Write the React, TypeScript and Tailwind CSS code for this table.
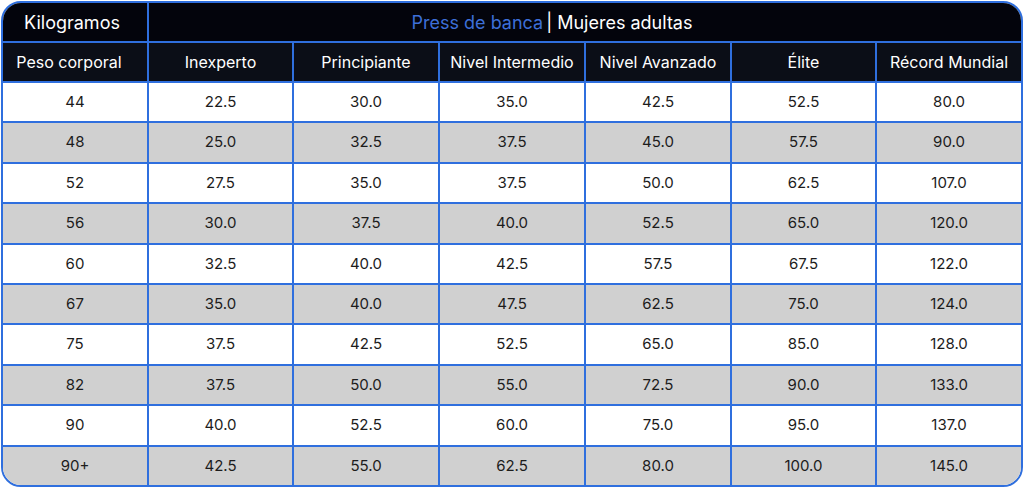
import React from "react";

const cols = ["Peso corporal", "Inexperto", "Principiante", "Nivel Intermedio", "Nivel Avanzado", "Élite", "Récord Mundial"];
const rows = [
  ["44", "22.5", "30.0", "35.0", "42.5", "52.5", "80.0"],
  ["48", "25.0", "32.5", "37.5", "45.0", "57.5", "90.0"],
  ["52", "27.5", "35.0", "37.5", "50.0", "62.5", "107.0"],
  ["56", "30.0", "37.5", "40.0", "52.5", "65.0", "120.0"],
  ["60", "32.5", "40.0", "42.5", "57.5", "67.5", "122.0"],
  ["67", "35.0", "40.0", "47.5", "62.5", "75.0", "124.0"],
  ["75", "37.5", "42.5", "52.5", "65.0", "85.0", "128.0"],
  ["82", "37.5", "50.0", "55.0", "72.5", "90.0", "133.0"],
  ["90", "40.0", "52.5", "60.0", "75.0", "95.0", "137.0"],
  ["90+", "42.5", "55.0", "62.5", "80.0", "100.0", "145.0"],
];

export default function App() {
  return (
    <div className="w-[1024px] h-[488px] bg-white p-[1px]" style={{ fontFamily: "Inter, 'Noto Sans', sans-serif" }}>
      <div className="w-[1022px] h-[486px] rounded-[20px] border-2 border-[#2f6fde] overflow-hidden flex flex-col">
        <div className="flex h-[40px] bg-[#03040c] border-b-2 border-[#2f6fde]">
          <div className="w-[146px] border-r-2 border-[#2f6fde] flex items-center justify-center text-white text-[18px] pr-[6px]">Kilogramos</div>
          <div className="flex-1 flex items-center justify-center text-[18px] pr-[66px]">
            <span className="text-[#3d6fd8]">Press de banca</span>
            <span className="text-white ml-[3px]">| Mujeres adultas</span>
          </div>
        </div>
        <div className="grid grid-cols-[146px_145px_146px_146px_146px_145px_1fr] h-[40px] bg-[#0b0e17] border-b-2 border-[#2f6fde]">
          {cols.map((c, i) => (
            <div key={i} className={`flex items-center justify-center text-white text-[16px] ${i === 0 ? "pr-[12px]" : ""} ${i < 6 ? "border-r-2 border-[#2f6fde]" : ""}`}>{c}</div>
          ))}
        </div>
        {rows.map((r, ri) => (
          <div key={ri} className={`grid grid-cols-[146px_145px_146px_146px_146px_145px_1fr] flex-1 ${ri % 2 === 1 ? "bg-[#d0d0d0]" : "bg-white"} ${ri < rows.length - 1 ? "border-b-2 border-[#2f6fde]" : ""}`}>
            {r.map((v, i) => (
              <div key={i} className={`flex items-center justify-center text-[#1c1c1c] text-[15px] ${i < 6 ? "border-r-2 border-[#2f6fde]" : ""}`}>{v}</div>
            ))}
          </div>
        ))}
      </div>
    </div>
  );
}
